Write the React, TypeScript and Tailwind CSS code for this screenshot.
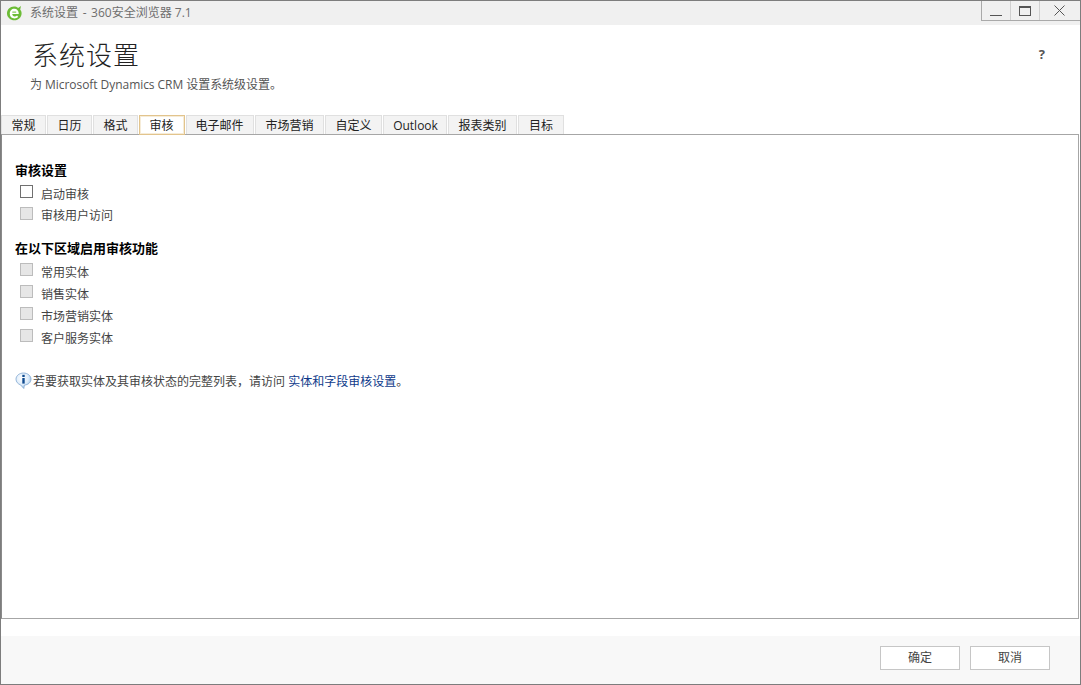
const tabs = [
  { label: "常规", width: "w-[45px]" },
  { label: "日历", width: "w-[45px]" },
  { label: "格式", width: "w-[45px]" },
  { label: "审核", width: "w-[46px] pr-[1px]", active: true },
  { label: "电子邮件", width: "w-[68px] pr-[1px]" },
  { label: "市场营销", width: "w-[69px]" },
  { label: "自定义", width: "w-[57px]" },
  { label: "Outlook", width: "w-[64px] pl-[1px]" },
  { label: "报表类别", width: "w-[69px]" },
  { label: "目标", width: "w-[46px]" },
];

const Check = ({ label, enabled, tight }: { label: string; enabled?: boolean; tight?: boolean }) => (
  <div className="flex h-[22px] items-center pl-[5px]">
    <span
      className={`mb-[3px] h-[13px] w-[13px] border ${enabled ? "border-[#707070] bg-white" : "border-[#bcbcbc] bg-[#e6e6e6]"}`}
    />
    <span className={`ml-[8px] text-[12px] text-[#444444] ${tight ? "mt-[2px]" : "mt-[4px]"}`}>{label}</span>
  </div>
);

const InfoIcon = () => (
  <svg width="17" height="18" viewBox="0 0 17 18" className="shrink-0">
    <defs>
      <radialGradient id="bubble" cx="0.4" cy="0.35" r="0.7">
        <stop offset="0" stopColor="#ffffff" />
        <stop offset="0.6" stopColor="#dcebfa" />
        <stop offset="1" stopColor="#8fb8e0" />
      </radialGradient>
    </defs>
    <path
      d="M8.5 1C4.4 1 1 3.7 1 7.2c0 2.6 1.9 4.8 4.6 5.7L8.8 16.5l.6-3.4c3.8-.3 6.6-2.8 6.6-5.9C16 3.7 12.6 1 8.5 1z"
      fill="url(#bubble)"
      stroke="#7fa6cf"
      strokeWidth="0.8"
    />
    <rect x="7.3" y="6" width="2.4" height="5.6" fill="#0f4a8f" />
    <rect x="7.3" y="2.8" width="2.4" height="2.2" fill="#0f4a8f" />
  </svg>
);

const BrowserLogo = () => (
  <svg width="16" height="16" viewBox="0 0 16 16">
    <path d="M8 1.6c1.6 0 3 .5 4.1 1.4L15 .9l-.8 3.7c.9 1.1 1.4 2.500 1.400 3.900 0 3.600-3.100 6.800-7.100 6.800S1 12.300 1 8.500 4 1.600 8 1.600z" fill="#6cbc36" />
    <path
      d="M12.800 9.100H6.200c.2 1.500 1.100 2.300 2.400 2.300.9 0 1.800-.4 2.500-1l1.100 1.700c-1 .9-2.300 1.300-3.700 1.300-2.800 0-4.700-1.900-4.700-4.700 0-2.800 1.900-4.900 4.500-4.900 2.700 0 4.500 2 4.500 5.300z"
      fill="#ffffff"
    />
    <rect x="6.300" y="6.600" width="3.900" height="1" fill="#6cbc36" />
  </svg>
);

export default function App() {
  return (
    <div className="flex h-[685px] w-[1081px] flex-col overflow-hidden border border-[#7d7d7d] bg-white font-['Open_Sans','Noto_Sans_CJK_SC',sans-serif]">
      <div className="flex h-[24px] shrink-0 items-start justify-between bg-[#f0f0f0]">
        <div className="flex h-[24px] items-center pl-[5px]">
          <BrowserLogo />
          <span className="ml-[8px] text-[12px] text-[#6e6e6e]">
            系统设置 <span className="mx-[1.5px]">-</span> 360安全浏览器 7.1
          </span>
        </div>
        <div className="mr-[-1px] flex h-[20px] border-b border-l border-[#a9a9a9] text-[#555555]">
          <div className="flex w-[29px] items-end justify-center border-r border-[#d0d0d0] pb-[4px]">
            <span className="h-px w-[12px] bg-[#555555]" />
          </div>
          <div className="flex w-[29px] items-center justify-center border-r border-[#d0d0d0]">
            <span className="h-[10px] w-[12px] border border-t-2 border-[#555555]" />
          </div>
          <div className="flex w-[41px] items-center justify-center pr-[3px]">
            <svg width="11" height="11" viewBox="0 0 11 11" stroke="#555555" strokeWidth="1" fill="none">
              <path d="M.5.5l10 10M10.5.5l-10 10" />
            </svg>
          </div>
        </div>
      </div>

      <div className="flex h-[90px] shrink-0 items-start justify-between">
        <div className="pl-[29px]">
          <h1 className="ml-[2px] mt-[11px] text-[26px] leading-[38px] font-light tracking-[1px] text-[#222222]">系统设置</h1>
          <p className="mt-[3px] text-[12px] leading-[16px] tracking-[-0.05px] text-[#555555]">为 Microsoft Dynamics CRM 设置系统级设置。</p>
        </div>
        <span className="mr-[35px] mt-[20px] text-[13px] font-bold text-[#555555]">?</span>
      </div>

      <div className="flex h-[19px] shrink-0 gap-px">
        {tabs.map((tab) => (
          <div
            key={tab.label}
            className={`flex items-center justify-center border-x border-t pt-[2px] text-[12px] text-[#222222] ${tab.width} ${
              tab.active
                ? "z-10 -mb-px border-b border-[#e2c48d] bg-white shadow-[inset_0_0_0_1px_#f6ecd8]"
                : "border-[#e0e0e0] bg-[#f3f3f3]"
            }`}
          >
            {tab.label}
          </div>
        ))}
      </div>

      <div className="mr-px h-[485px] shrink-0 border border-[#a6a6a6] border-l-[#8a8a8a] pl-[13px] pt-[27px]">
        <h2 className="text-[13px] leading-[16px] font-bold text-black">审核设置</h2>
        <div className="mt-[4px]">
          <Check label="启动审核" enabled />
          <Check label="审核用户访问" tight />
        </div>
        <h2 className="mt-[14px] text-[13px] leading-[16px] font-bold text-black">在以下区域启用审核功能</h2>
        <div className="mt-[4px]">
          <Check label="常用实体" />
          <Check label="销售实体" />
          <Check label="市场营销实体" />
          <Check label="客户服务实体" />
        </div>
        <div className="mt-[22px] flex items-center text-[12px] text-[#444444]">
          <InfoIcon />
          <span className="ml-px mt-[3px]">
            若要获取实体及其审核状态的完整列表，请访问 <span className="text-[#0f3a8a]">实体和字段审核设置</span>。
          </span>
        </div>
      </div>

      <div className="mt-[17px] flex flex-1 items-start justify-end gap-[10px] bg-[#f8f8f8] pr-[30px] pt-[10px]">
        <button className="h-[24px] w-[80px] border border-[#c6c6c6] bg-white text-[12px] text-[#444444]">确定</button>
        <button className="h-[24px] w-[80px] border border-[#c6c6c6] bg-white text-[12px] text-[#444444]">取消</button>
      </div>
    </div>
  );
}
